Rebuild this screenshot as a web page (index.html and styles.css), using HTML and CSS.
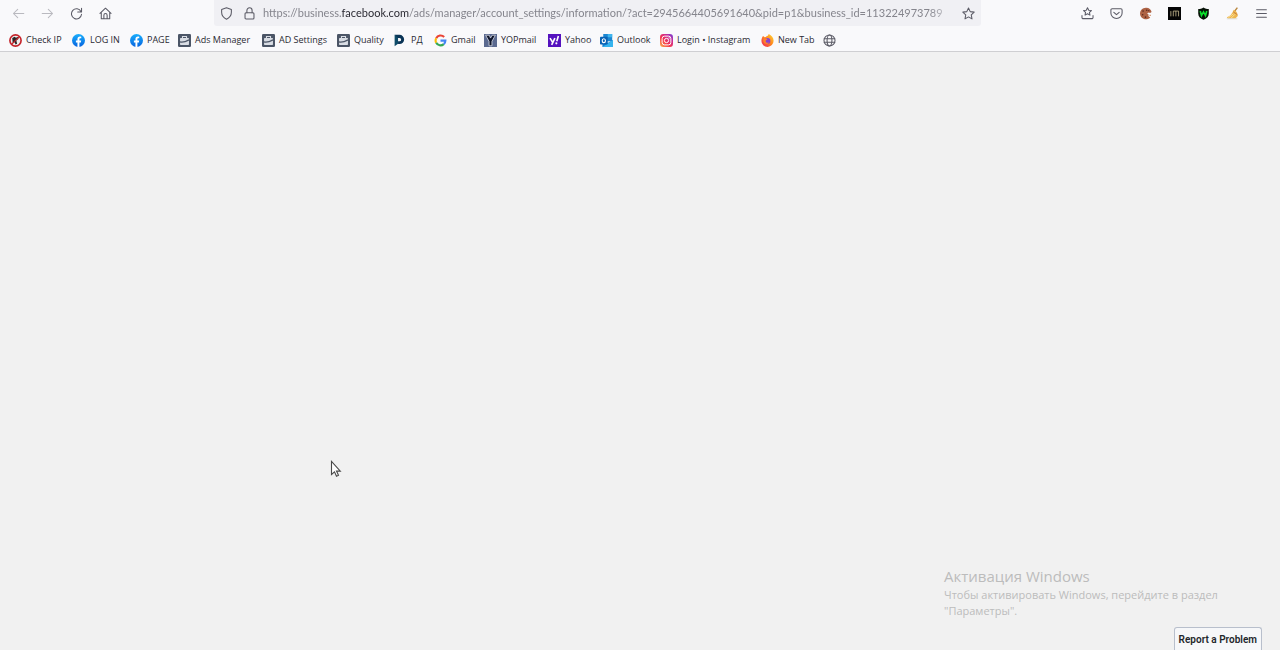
FILE: index.html
```html
<!DOCTYPE html>
<html lang="en">
<head>
<meta charset="utf-8">
<title>Account settings</title>
<link rel="stylesheet" href="styles.css">
</head>
<body>
<svg class="defs" width="0" height="0" aria-hidden="true">
  <defs>
    <linearGradient id="fb" x1="0" y1="0" x2="0" y2="1"><stop offset="0" stop-color="#19aefc"/><stop offset="1" stop-color="#0763df"/></linearGradient>
    <linearGradient id="ig" x1="0" y1="1" x2="1" y2="0"><stop offset="0" stop-color="#fdb84a"/><stop offset=".4" stop-color="#f4364c"/><stop offset=".7" stop-color="#cc2a93"/><stop offset="1" stop-color="#6a45dc"/></linearGradient>
    <linearGradient id="fx" x1="1" y1="0" x2="0" y2="1"><stop offset="0" stop-color="#ffdf38"/><stop offset=".45" stop-color="#ff8a1e"/><stop offset="1" stop-color="#ef1c5c"/></linearGradient>
    <symbol id="facebook" viewBox="0 0 16 16"><circle cx="8" cy="8" r="8" fill="url(#fb)"/><path fill="#fff" d="M6.700 15.900v-5.500H4.800V8h1.900V6.300C6.700 4.200 7.900 3.100 9.700 3.100c.6 0 1.200.1 1.700.2v2h-1c-1 0-1.300.6-1.300 1.200V8h2.200l-.4 2.400H9.100v5.500a8 8 0 0 1-2.400 0z"/></symbol>
    <symbol id="business" viewBox="0 0 16 16"><rect width="16" height="16" rx="1.500" fill="#4b5566"/><path d="M5.500 5.500V3h5v2.500" fill="none" stroke="#d9dde4" stroke-width="1.300"/><rect x="2.500" y="5" width="11" height="8.500" rx=".8" fill="#d9dde4"/><path d="M2.500 9.800c4 .8 7-.3 11-2.600" fill="none" stroke="#4b5566" stroke-width="1.500"/></symbol>
  </defs>
</svg>

<header class="browser">
  <div class="toolbar">
    <nav class="history" aria-label="Navigation">
      <button class="tool faded" aria-label="Back"><svg class="line" viewBox="0 0 16 16"><path d="M14.500 8H2M7 2.800L1.800 8 7 13.200"/></svg></button>
      <button class="tool faded" aria-label="Forward"><svg class="line" viewBox="0 0 16 16"><path d="M1.500 8H14M9 2.800L14.200 8 9 13.200"/></svg></button>
      <button class="tool" aria-label="Reload"><svg class="line" viewBox="0 0 16 16"><path d="M13.500 5.500A6.200 6.200 0 1 0 14.200 9M14.200 1.500v4.700H9.500"/></svg></button>
      <button class="tool" aria-label="Home"><svg class="line" viewBox="0 0 16 16"><path d="M1.200 7.800L8 1.500l6.800 6.300M2.800 6.800V14.500h10.400V6.800M6 14.500V10a2 2 0 0 1 4 0v4.500"/></svg></button>
    </nav>
    <div class="address">
      <button class="tool" aria-label="Tracking protection"><svg class="line" viewBox="0 0 16 16"><path d="M8 1l6 2.200v3.300c0 3.800-2.500 6.800-6 8.500-3.500-1.700-6-4.700-6-8.500V3.200z"/></svg></button>
      <button class="tool lock" aria-label="Site security"><svg class="line" viewBox="0 0 16 16"><rect x="2.500" y="7" width="11" height="7.800" rx="1.200"/><path d="M4.800 7V4.200a3.200 3.200 0 0 1 6.400 0V7"/></svg></button>
      <div class="url" role="textbox" aria-label="Address" contenteditable="true" spellcheck="false">https://business.<span class="host">facebook.com</span>/ads/manager/account_settings/information/?act=2945664405691640&amp;pid=p1&amp;business_id=113224973789</div>
      <button class="tool" aria-label="Bookmark this page"><svg class="line" viewBox="0 0 16 16"><path d="M8 1.200l2.100 4.500 4.900.6-3.600 3.400.9 4.900L8 12.200l-4.300 2.400.9-4.900L1 6.300l4.900-.6z"/></svg></button>
    </div>
    <div class="extensions">
      <button class="tool" aria-label="Bookmarks menu"><svg class="line" viewBox="0 0 16 16"><path d="M8 1l1.500 3 3.300.4-2.400 2.300.6 3.300-3-1.600L5 10l.6-3.300-2.400-2.300L6.500 4zM1.200 10.500v2.300a1.500 1.500 0 0 0 1.500 1.500h10.600a1.500 1.500 0 0 0 1.500-1.500v-2.300"/></svg></button>
      <button class="tool" aria-label="Pocket"><svg class="line" viewBox="0 0 16 16"><path d="M2.600 2.200h10.800A1.500 1.500 0 0 1 14.900 3.700v3.600a6.900 6.900 0 0 1-13.800 0V3.700a1.500 1.500 0 0 1 1.500-1.500zM4.700 6.500L8 9.500l3.300-3"/></svg></button>
      <button class="tool" aria-label="Cookie editor"><svg viewBox="0 0 16 16"><path d="M9 .8a7.200 7.200 0 1 0 4.800 12l-2.300-1.600.4-2-2-.8 2-1.600 1.800.6 1.800-1.200A7 7 0 0 0 9 .8z" fill="#ad6244"/><g fill="#5c2b20"><circle cx="5" cy="5" r="1"/><circle cx="9.500" cy="4" r="1"/><circle cx="4.500" cy="9.500" r="1"/><circle cx="8" cy="12.500" r="1"/><circle cx="12" cy="4.500" r=".8"/></g><path d="M13 9.500h1.500v1.500H13z" fill="#d08a60"/></svg></button>
      <button class="tool" aria-label="iM extension"><svg viewBox="0 0 16 16"><path d="M0 0h16v16H0z" fill="#050505"/><path d="M3.500 5v6.500M6.500 11.500V5H13v6.500M9.700 5v6.500" stroke="#c5b98f" fill="none"/></svg></button>
      <button class="tool" aria-label="WebRTC control"><svg viewBox="0 0 16 16"><path d="M8 .5c2 1.300 4.200 1.800 6.500 1.900V8c0 4-2.800 6.300-6.500 7.800C4.300 14.300 1.500 12 1.500 8V2.400C3.800 2.300 6 1.800 8 .5z" fill="#061206"/><path d="M4 5l1.500 5.500L8 6l2.500 4.500L12 5" stroke="#0be02c" stroke-width="2" fill="none"/></svg></button>
      <button class="tool" aria-label="Cleaner"><svg viewBox="0 0 16 16"><path d="M14 .8L10 6" stroke="#b9853c" stroke-width="1.800"/><path d="M9.500 3.500c3 1 4.800 4 5 7.500L11.500 14H2.500L1 12.500c4-1 6.500-4 8.500-9z" fill="#edb64d"/><path d="M3 13l6-4.500M6.500 13.500L11 9" stroke="#fbe7aa"/><path d="M9 6l5 3.500" stroke="#c2713d"/><path d="M1 14.500h13" stroke="#d8d6cc"/></svg></button>
      <button class="tool" aria-label="Application menu"><svg class="line" viewBox="0 0 16 16"><path d="M2 3.500h12M2 8h12M2 12.500h12"/></svg></button>
    </div>
  </div>

  <nav class="bookmarks" aria-label="Bookmarks">
    <a href="#"><svg viewBox="0 0 16 16"><circle cx="8" cy="8" r="6.900" fill="#eee"/><path d="M4 5l3-1.500 1.500 1 3-1v2.500L9 8l1 4-2 1-1-3-2.500 1z" fill="#272727"/><circle cx="8" cy="8" r="6.900" fill="none" stroke="#c5232a" stroke-width="2"/><path d="M3.200 12.800l9.600-9.600" stroke="#c5232a" stroke-width="1.600"/></svg><span>Check IP</span></a>
    <a href="#" class="wide-gap"><svg><use href="#facebook"/></svg><span>LOG IN</span></a>
    <a href="#"><svg><use href="#facebook"/></svg><span>PAGE</span></a>
    <a href="#"><svg><use href="#business"/></svg><span>Ads Manager</span></a>
    <a href="#"><svg><use href="#business"/></svg><span>AD Settings</span></a>
    <a href="#"><svg><use href="#business"/></svg><span>Quality</span></a>
    <a href="#" class="wide-gap"><svg viewBox="0 0 16 16"><path d="M2 1h6a5.700 5.700 0 0 1 0 11.400H6.200V9H8a2 2 0 0 0 0-4H4.500z" fill="#0b3557"/><path d="M2 1l4.200 3.500V12L2 15.200z" fill="#0e4b68"/></svg><span>РД</span></a>
    <a href="#"><svg viewBox="0 0 16 16" fill="none" stroke-width="2.600"><path d="M12.500 3.800A6 6 0 0 0 2.700 5.200" stroke="#ea4335"/><path d="M2.700 5.200a6 6 0 0 0 0 5.600" stroke="#fbbc05"/><path d="M2.700 10.800a6 6 0 0 0 9.300 1.700" stroke="#34a853"/><path d="M12 12.500A6 6 0 0 0 14 8.200H8" stroke="#4285f4"/></svg><span>Gmail</span></a>
    <a href="#"><svg viewBox="0 0 16 16"><path d="M0 0h16v16H0z" fill="#5b6a90"/><path d="M2 1.500h4.500L8 5l2-3.500h4L9.800 9v5.500H6.200V9z" fill="#10162b" stroke="#d7dbe5"/></svg><span>YOPmail</span></a>
    <a href="#"><svg viewBox="0 0 16 16"><path d="M0 0h16v16H0z" fill="#5512bf"/><path d="M2.500 5l3 5M8.500 5l-4 8.500M12.800 2.500L10.800 9" stroke="#fff" stroke-width="2"/><circle cx="10.300" cy="11.500" r="1.300" fill="#fff"/></svg><span>Yahoo</span></a>
    <a href="#"><svg viewBox="0 0 16 16"><path d="M4 0h11v9H4z" fill="#1b86d2"/><path d="M9.500 0H15v4H9.500z" fill="#3fb5ee"/><path d="M3 8l6.500 3L16 7.500V16H3z" fill="#1780d0"/><path d="M3 16l13-8.500V16z" fill="#35b4ee"/><rect y="3.500" width="9.500" height="9.500" rx="1" fill="#0963b5"/><ellipse cx="4.700" cy="8.200" rx="2" ry="2.400" fill="none" stroke="#fff" stroke-width="1.400"/></svg><span>Outlook</span></a>
    <a href="#"><svg viewBox="0 0 16 16"><rect width="16" height="16" rx="4" fill="url(#ig)"/><g fill="none" stroke="#fff" stroke-width="1.200"><rect x="2.600" y="2.600" width="10.800" height="10.800" rx="3"/><circle cx="8" cy="8" r="2.600"/></g><circle cx="11.200" cy="4.800" r=".8" fill="#fff"/></svg><span>Login • Instagram</span></a>
    <a href="#"><svg viewBox="0 0 16 16"><path d="M2.500 2.500L4.500 4l1.500-.2C7 2 8.500 3 9.500 0c3.500 1.500 6 4.500 6 8.300A7.500 7.500 0 0 1 .5 8.500c0-2.500.8-4.500 2-6z" fill="url(#fx)"/><circle cx="8" cy="8.500" r="3.500" fill="#8941cf"/><path d="M3 6c2-1.500 3.500 0 5 .3-.5 1.500-2 1-2.200 2.200C5.500 10.500 8 11.500 10 10c-1 3-6 3-7-.5z" fill="#ff812b"/></svg><span>New Tab</span></a>
    <a href="#" aria-label="Untitled bookmark"><svg class="line" viewBox="0 0 16 16"><circle cx="8" cy="8" r="6.800"/><ellipse cx="8" cy="8" rx="3" ry="6.800"/><path d="M1.500 5.800h13M1.500 10.200h13"/></svg></a>
  </nav>
</header>

<main class="page">
  <aside class="activation" lang="ru">
    <h2>Активация Windows</h2>
    <p>Чтобы активировать Windows, перейдите в раздел "Параметры".</p>
  </aside>
  <button class="report">Report a Problem</button>
  <svg class="cursor" viewBox="0 0 12 18" aria-hidden="true"><path d="M1.500 1.500v13l3-2.700 2 4.400 2-.9-2-4.200h3.800z" fill="#fff" stroke="#4a4a4a" stroke-width="1.100"/></svg>
</main>
</body>
</html>
```
FILE: styles.css
```css
* {
  box-sizing: border-box;
}

body {
  display: flex;
  flex-direction: column;
  min-height: 100vh;
  margin: 0;
  overflow: hidden;
  background: #f1f1f1;
  color: #2b2a33;
  font-family: "Open Sans", "Noto Sans", sans-serif;
}

button {
  border: 0;
  padding: 0;
  background: none;
  color: inherit;
  font: inherit;
}

.defs {
  position: absolute;
}

.browser {
  border-bottom: 1px solid #cfcfd2;
  background: #f9f9fb;
}

.toolbar {
  display: flex;
  align-items: center;
  height: 26px;
}

.tool {
  display: flex;
  flex: none;
  width: 13px;
  height: 13px;
}

.tool svg {
  width: 100%;
  height: 100%;
}

.line {
  fill: none;
  stroke: #5b5b66;
  stroke-width: 1.3;
  stroke-linecap: round;
  stroke-linejoin: round;
}

.faded {
  opacity: 0.4;
}

.history {
  display: flex;
  flex: 0 0 214px;
  gap: 16px;
  padding-left: 12px;
}

.address {
  display: flex;
  flex: 1;
  align-items: center;
  min-width: 0;
  height: 100%;
  padding: 0 6px;
  border-radius: 0 0 3px 3px;
  background: #f0f0f4;
}

.lock {
  margin-left: 10px;
}

.url {
  flex: 1;
  min-width: 0;
  margin: 0 5px 0 7px;
  overflow: hidden;
  color: #85858d;
  font-family: Lato, sans-serif;
  font-size: 11px;
  line-height: 18px;
  white-space: nowrap;
  mask-image: linear-gradient(to left, transparent, #000 28px);
}

.host {
  color: #2b2a33;
}

.extensions {
  display: flex;
  flex: 0 0 299px;
  justify-content: flex-end;
  gap: 16px;
  padding-right: 12px;
}

.bookmarks {
  display: grid;
  grid-template-columns: 63px 58px 48px 84px 75px 56px 41px 50px 64px 52px 60px 101px 62px 13px;
  height: 25px;
  padding: 3px 9px 0;
}

.bookmarks a {
  display: flex;
  align-items: center;
  gap: 4px;
  color: inherit;
  font-size: 9px;
  line-height: 14px;
  text-decoration: none;
  white-space: nowrap;
}

.bookmarks .wide-gap {
  gap: 5px;
}

.bookmarks svg {
  flex: none;
  width: 13px;
  height: 13px;
}

.page {
  position: relative;
  display: flex;
  flex: 1;
  flex-direction: column;
  align-items: flex-end;
  justify-content: flex-end;
}

.activation {
  width: 300px;
  margin: 0 36px 8px 0;
  color: #bcbcbc;
}

.activation h2 {
  margin: 0;
  font-size: 15px;
  font-weight: 400;
  line-height: 22px;
}

.activation p {
  max-width: 290px;
  margin: 0;
  font-size: 11px;
  line-height: 16px;
}

.report {
  height: 23px;
  margin-right: 18px;
  padding: 0 4px;
  border: 1px solid #b8bfcc;
  border-bottom: 0;
  border-radius: 3px 3px 0 0;
  background: #f6f7f9;
  color: #23262b;
  font: 600 10px/24px Roboto, sans-serif;
}

.cursor {
  position: absolute;
  top: 408px;
  left: 330px;
  width: 12px;
  height: 18px;
}
```
